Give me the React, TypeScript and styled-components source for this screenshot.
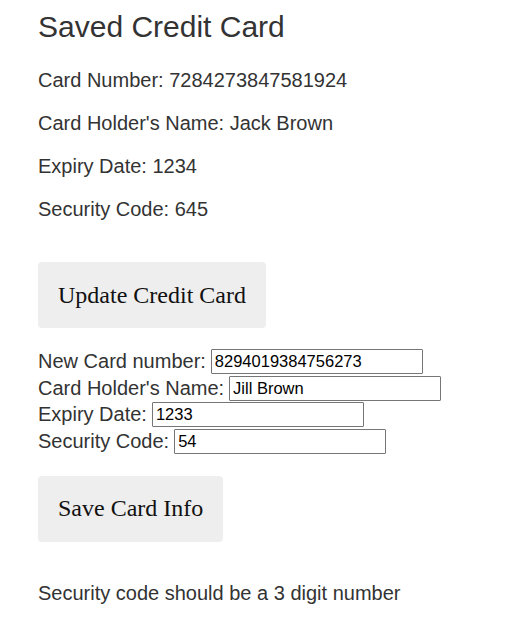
import React from "react";
import styled, { createGlobalStyle } from "styled-components";

const Global = createGlobalStyle`
  body { margin: 0; background: #fff; font-family: "Liberation Sans", Arial, sans-serif; color: #333; }
`;

const Page = styled.div`
  padding: 0 38px;
`;

const Title = styled.h2`
  font-size: 30px;
  font-weight: 400;
  margin: 9px 0 0;
  line-height: 35px;
`;

const Info = styled.p<{ $first?: boolean }>`
  font-size: 20px;
  margin: 0;
  line-height: 23px;
  margin-top: ${(p) => (p.$first ? 25 : 20)}px;
`;

const Button = styled.button<{ $top: number }>`
  display: block;
  border: none;
  border-radius: 4px;
  background: #eee;
  color: #111;
  font-family: "Liberation Serif", "Times New Roman", serif;
  font-size: 24px;
  padding: 0 20px;
  height: 66px;
  margin-top: ${(p) => p.$top}px;
`;

const Form = styled.div`
  margin-top: 20px;
  font-size: 20px;
`;

const Row = styled.div`
  display: flex;
  align-items: center;
  gap: 5px;
  height: 26.7px;
`;

const Input = styled.input`
  width: 212px;
  height: 25px;
  box-sizing: border-box;
  border: 1px solid #767676;
  border-radius: 1px;
  font-family: "Liberation Sans", Arial, sans-serif;
  font-size: 16.5px;
  padding: 1px 3px;
  color: #000;
`;

const Msg = styled.p`
  font-size: 20px;
  margin: 40px 0 0;
  line-height: 23px;
`;

export default function App() {
  return (
    <Page>
      <Global />
      <Title>Saved Credit Card</Title>
      <Info $first>Card Number: 7284273847581924</Info>
      <Info>Card Holder's Name: Jack Brown</Info>
      <Info>Expiry Date: 1234</Info>
      <Info>Security Code: 645</Info>
      <Button $top={41}>Update Credit Card</Button>
      <Form>
        <Row><label>New Card number:</label><Input defaultValue="8294019384756273" /></Row>
        <Row><label>Card Holder's Name:</label><Input defaultValue="Jill Brown" /></Row>
        <Row><label>Expiry Date:</label><Input defaultValue="1233" /></Row>
        <Row><label>Security Code:</label><Input defaultValue="54" /></Row>
      </Form>
      <Button $top={21}>Save Card Info</Button>
      <Msg>Security code should be a 3 digit number</Msg>
    </Page>
  );
}
